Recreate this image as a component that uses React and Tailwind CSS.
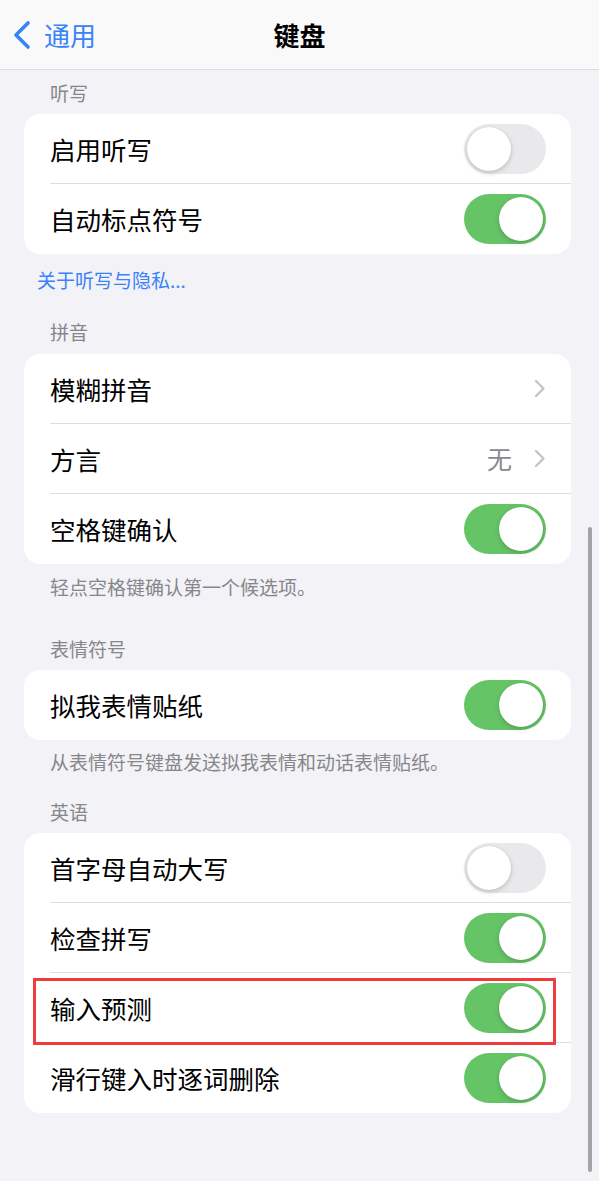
import React from 'react';

const font = { fontFamily: '"Noto Sans CJK SC", "Noto Sans", sans-serif' };

function Toggle({ on }) {
  return (
    <div
      className={`relative w-[82px] h-[50px] rounded-full shrink-0 ${on ? 'bg-[#65c466]' : 'bg-[#e9e9eb]'}`}
    >
      <div
        className={`absolute top-[3px] w-[44px] h-[44px] rounded-full bg-white shadow-[0_2px_5px_rgba(0,0,0,0.18),0_0_1px_rgba(0,0,0,0.12)] ${on ? 'left-[35px]' : 'left-[3px]'}`}
      />
    </div>
  );
}

function Chevron() {
  return (
    <svg width="12" height="19" viewBox="0 0 12 19" className="shrink-0">
      <path d="M2 2l7.5 7.5L2 17" fill="none" stroke="#c4c4c7" strokeWidth="2.4" strokeLinecap="round" strokeLinejoin="round" />
    </svg>
  );
}

function Row({ label, toggle, value, chevron, last, marked }) {
  return (
    <div className="relative h-[70px] flex items-center pl-[26px]">
      <div className={`flex-1 h-full flex items-center pr-[25px] ${last ? '' : 'border-b border-[#dedee0]'}`}>
        <span className="flex-1 text-[25.5px] text-black leading-none">{label}</span>
        {value && <span className="text-[25px] text-[#8a8a8e] mr-[22px] leading-none">{value}</span>}
        {chevron && <Chevron />}
        {toggle !== undefined && <Toggle on={toggle} />}
      </div>
      {marked && (
        <div className="absolute left-[9px] right-[15px] top-[5px] bottom-[-2px] border-[3px] border-[#f03c3c] pointer-events-none" />
      )}
    </div>
  );
}

function Card({ children }) {
  return <div className="ml-[24px] mr-[28px] bg-white rounded-[16px]">{children}</div>;
}

function Header({ children, className = '' }) {
  return (
    <div className={`px-[50px] text-[19px] leading-[26px] text-[#86868b] ${className}`}>{children}</div>
  );
}

export default function App() {
  return (
    <div className="relative w-[599px] h-[1181px] bg-[#f2f2f7] overflow-hidden" style={font}>
      <div className="relative h-[70px] bg-[#f9f9f9] border-b border-[#dcdcdf] flex items-center">
        <div className="flex items-center pl-[13px]">
          <svg width="20" height="30" viewBox="0 0 20 30">
            <path d="M15 3L3 15l12 12" fill="none" stroke="#3a82f7" strokeWidth="3.6" strokeLinecap="round" strokeLinejoin="round" />
          </svg>
          <span className="ml-[11px] text-[26px] text-[#3a82f7] leading-none">通用</span>
        </div>
        <div className="absolute inset-x-0 text-center text-[26px] font-bold text-black leading-none pointer-events-none">键盘</div>
      </div>

      <Header className="pt-[10px] pb-[8px]">听写</Header>
      <Card>
        <Row label="启用听写" toggle={false} />
        <Row label="自动标点符号" toggle={true} last />
      </Card>
      <div className="px-[37px] pt-[13px] text-[19px] leading-[26px] text-[#3a82f7]">关于听写与隐私...</div>

      <Header className="pt-[26px] pb-[9px]">拼音</Header>
      <Card>
        <Row label="模糊拼音" chevron />
        <Row label="方言" value="无" chevron />
        <Row label="空格键确认" toggle={true} last />
      </Card>
      <Header className="pt-[10px]">轻点空格键确认第一个候选项。</Header>

      <Header className="pt-[36px] pb-[8px]">表情符号</Header>
      <Card>
        <Row label="拟我表情贴纸" toggle={true} last />
      </Card>
      <Header className="pt-[9px]">从表情符号键盘发送拟我表情和动话表情贴纸。</Header>

      <Header className="pt-[24px] pb-[8px]">英语</Header>
      <Card>
        <Row label="首字母自动大写" toggle={false} />
        <Row label="检查拼写" toggle={true} />
        <Row label="输入预测" toggle={true} marked />
        <Row label="滑行键入时逐词删除" toggle={true} last />
      </Card>

      <div className="absolute left-[588px] top-[527px] w-[4px] h-[645px] rounded-full bg-[#a3a3a6]" />
    </div>
  );
}
